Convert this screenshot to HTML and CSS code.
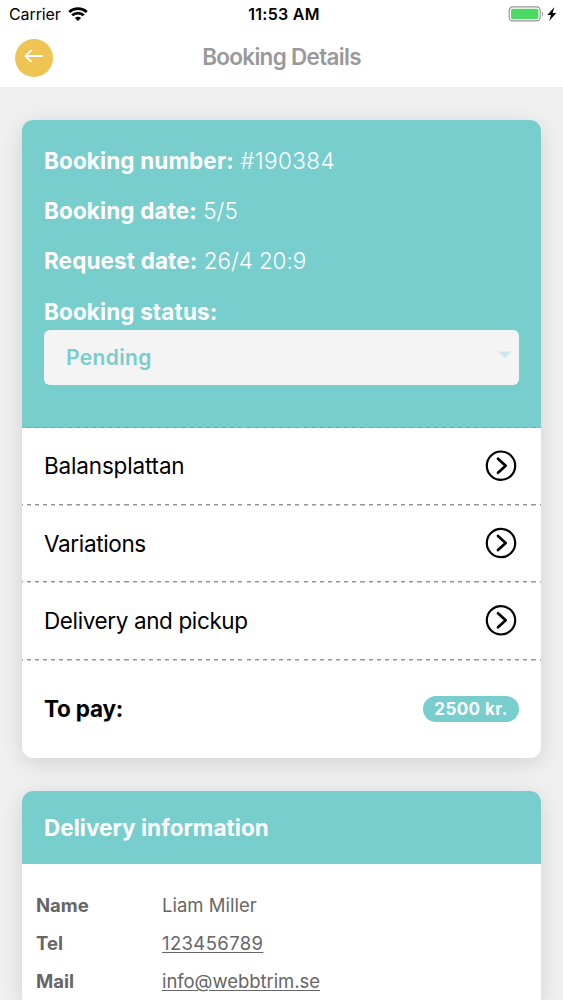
FILE: index.html
```html
<!DOCTYPE html>
<html lang="en">
<head>
<meta charset="utf-8">
<title>Booking Details</title>
<link rel="stylesheet" href="styles.css">
</head>
<body>
<header class="header">
  <div class="statusbar">
    <div class="carrier">
      <span class="carrier-name">Carrier</span>
      <svg class="wifi" width="20" height="14" viewBox="0 0 20 14" fill="none" stroke="#000" stroke-width="2.7">
        <path d="M1.2 4.9C6.2 .4 13.8 .4 18.8 4.9"/>
        <path d="M4.2 8.3C7.5 5.3 12.5 5.3 15.8 8.3"/>
        <path d="M10 13.9L6.9 10.9C8.6 9.4 11.4 9.4 13.1 10.9Z" fill="#000" stroke="none"/>
      </svg>
    </div>
    <time class="clock">11:53 AM</time>
    <svg class="battery" width="50" height="16" viewBox="0 0 50 16">
      <rect x="1.2" y=".9" width="31" height="14" rx="3.6" fill="none" stroke="#959595" stroke-width="1.2"/>
      <rect x="3" y="2.7" width="27.4" height="10.4" rx="1.7" fill="#4cd964"/>
      <path d="M34 5.4C35.5 6.2 35.5 9.6 34 10.4Z" fill="#959595"/>
      <path d="M46.3 1.2L39.3 8.9H43L41.2 14.9L48.3 7.1H44.6Z" fill="#000"/>
    </svg>
  </div>
  <div class="navbar">
    <button class="back" aria-label="Back">
      <svg width="20" height="14" viewBox="0 0 20 14" fill="none" stroke="#fff" stroke-width="1.9" stroke-linecap="round" stroke-linejoin="round">
        <path d="M18.3 7H1.5M7 1.6L1.5 7L7 12.4"/>
      </svg>
    </button>
    <h1 class="title">Booking Details</h1>
  </div>
</header>

<main class="content">
  <section class="card">
    <div class="summary">
      <p class="fact"><b>Booking number:</b> <span class="value-number">#190384</span></p>
      <p class="fact"><b>Booking date:</b> <span>5/5</span></p>
      <p class="fact"><b>Request date:</b> <span class="value-time">26/4 20:9</span></p>
      <p class="fact"><b>Booking status:</b></p>
      <div class="select">
        <span class="select-value">Pending</span>
        <svg width="14" height="8" viewBox="0 0 14 8"><path d="M.3 .6H13.5L6.9 7.2Z" fill="#c9e9e8"/></svg>
      </div>
    </div>
    <div class="row">
      <span class="product">Balansplattan</span>
      <svg class="chevron" width="32" height="32" viewBox="0 0 32 32"><circle cx="16" cy="15.7" r="14.2"/><path d="M13 8.7L20.7 15.7L13 22.7"/></svg>
    </div>
    <div class="row">
      <span class="variations">Variations</span>
      <svg class="chevron" width="32" height="32" viewBox="0 0 32 32"><circle cx="16" cy="16" r="14.2"/><path d="M13 9L20.7 16L13 23"/></svg>
    </div>
    <div class="row">
      <span class="delivery">Delivery and pickup</span>
      <svg class="chevron" width="32" height="32" viewBox="0 0 32 32"><circle cx="16" cy="16.3" r="14.2"/><path d="M13 9.3L20.7 16.3L13 23.3"/></svg>
    </div>
    <div class="total">
      <b class="total-label">To pay:</b>
      <span class="pill">2500 kr.</span>
    </div>
  </section>

  <section class="card card-open">
    <h2 class="card-title">Delivery information</h2>
    <dl class="info">
      <dt>Name</dt><dd>Liam Miller</dd>
      <dt>Tel</dt><dd><a class="phone" href="tel:123456789">123456789</a></dd>
      <dt>Mail</dt><dd><a class="mail" href="mailto:info@webbtrim.se">info@webbtrim.se</a></dd>
    </dl>
  </section>
</main>
</body>
</html>
```
FILE: styles.css
```css
* { box-sizing: border-box; }

body {
  margin: 0;
  height: 1000px;
  overflow: hidden;
  background: #f0f0f0;
  color: #000;
  font-family: Inter, "Liberation Sans", sans-serif;
}

h1, h2, p, dl, dd { margin: 0; }

svg { display: block; flex: none; }

/* Header */
.header { height: 87px; background: #fff; }

.statusbar {
  display: grid;
  grid-template-columns: 1fr auto 1fr;
  align-items: center;
  height: 28px;
  padding: 0 5px 0 9px;
  font-size: 16px;
}

.carrier { display: flex; align-items: center; gap: 7px; }
.carrier-name { letter-spacing: -.1px; }
.wifi { margin-bottom: 1px; }
.clock { padding-left: 1px; font-weight: 600; letter-spacing: .3px; }
.battery { justify-self: end; }

.navbar {
  display: grid;
  grid-template-columns: 38px 1fr 38px;
  align-items: center;
  height: 59px;
  padding: 0 15px;
}

.back {
  display: grid;
  place-items: center;
  width: 38px;
  height: 38px;
  padding: 0 0 3px;
  border: 0;
  border-radius: 50%;
  background: #eec453;
}

.title {
  color: #999;
  font-size: 22.5px;
  font-weight: 600;
  letter-spacing: -.7px;
  line-height: 27px;
  padding-bottom: 2px;
  text-align: center;
}

/* Cards */
.content { display: grid; gap: 33px; padding: 33px 22px 0; }

.card {
  overflow: hidden;
  border-radius: 11px;
  background: #fff;
  box-shadow: 0 5px 22px rgba(0, 0, 0, .13);
}

.card-open { border-radius: 11px 11px 0 0; }

.summary {
  height: 307px;
  padding: 15px 22px 0;
  background: #78cdcd;
  color: #fff;
}

.fact { height: 50.2px; font-size: 22.5px; font-weight: 300; line-height: 51px; white-space: nowrap; }
.fact b { font-weight: 700; letter-spacing: .12px; }
.fact:nth-of-type(4) { height: 44.7px; }
.value-number { letter-spacing: .4px; }
.value-time { letter-spacing: -.1px; }

.select {
  display: flex;
  align-items: center;
  justify-content: space-between;
  height: 54.4px;
  padding: 0 7px 0 22px;
  border-radius: 6px;
  background: #f4f4f4;
  color: #78cdcd;
  font-size: 21px;
  font-weight: 600;
}
.select-value { letter-spacing: .35px; }
.select svg { margin-bottom: 4px; }

/* Rows, each topped with a dashed rule */
.row, .total {
  display: flex;
  align-items: center;
  justify-content: space-between;
  height: 77.4px;
  padding: 0 24px 0 22px;
  background:
    repeating-linear-gradient(90deg, #979797 0 4.1px, transparent 4.1px 8.14px) -3.4px 0 / calc(100% + 4px) 1px no-repeat,
    repeating-linear-gradient(90deg, #cacaca 0 4.1px, transparent 4.1px 8.14px) -3.4px 1px / calc(100% + 4px) 1px no-repeat;
  font-size: 22.5px;
}

.summary + .row {
  height: 77px;
  background: repeating-linear-gradient(90deg, #979797 0 4.1px, #78cdcd 4.1px 8.14px) -3.4px 0 / calc(100% + 4px) 1px no-repeat;
}

.product { letter-spacing: -.17px; }
.variations { letter-spacing: -.35px; padding-top: 1px; }
.delivery { letter-spacing: -.38px; }

.chevron { fill: none; stroke: #000; stroke-width: 2.2; }
.chevron path { stroke-width: 2.7; stroke-linecap: round; stroke-linejoin: round; }

.total { height: 98.8px; padding: 1px 22px 0; }
.total-label { font-weight: 700; letter-spacing: -.2px; }

.pill {
  display: grid;
  place-items: center;
  width: 96px;
  height: 26px;
  border-radius: 13px;
  background: #78cdcd;
  color: #fff;
  font-size: 17px;
  font-weight: 700;
  letter-spacing: .45px;
}

.card-title {
  height: 73px;
  padding: 0 22px;
  background: #78cdcd;
  color: #fff;
  font-size: 22.5px;
  font-weight: 700;
  line-height: 73px;
  letter-spacing: .03px;
}

.info {
  display: grid;
  grid-template-columns: 126px 1fr;
  grid-auto-rows: 38px;
  height: 136px;
  padding: 22px 14px 0;
  color: #666;
  font-size: 18.5px;
  line-height: 38px;
}
.info dt { font-weight: 700; }
.info a { color: inherit; text-decoration-thickness: 1px; text-underline-offset: 2px; }
.info .phone { letter-spacing: .38px; }
.info .mail { letter-spacing: -.05px; }
```
